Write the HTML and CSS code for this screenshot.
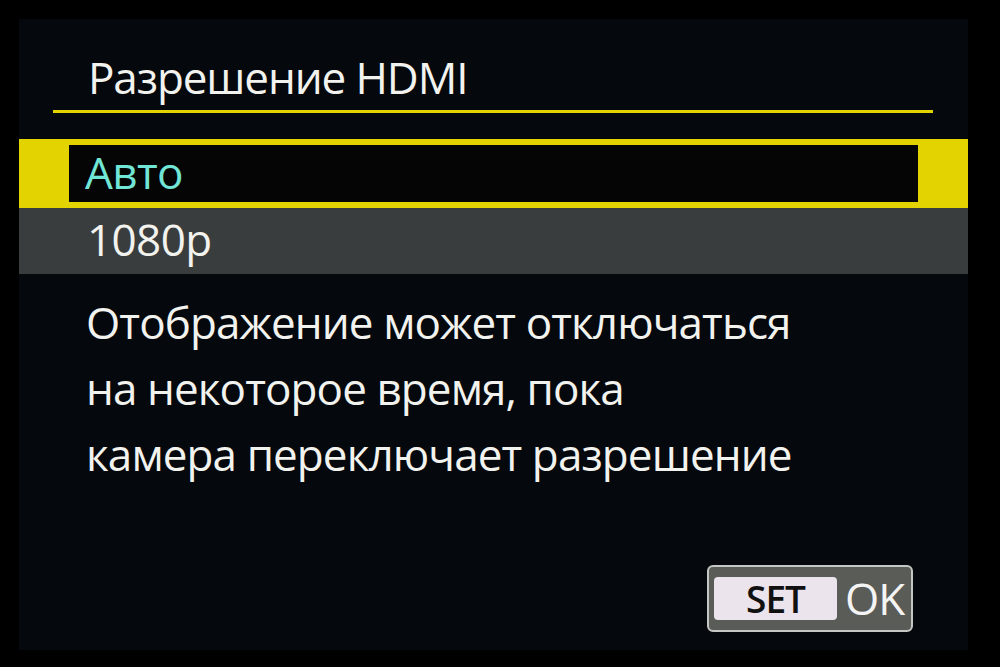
FILE: index.html
```html
<!DOCTYPE html>
<html lang="ru">
<head>
    <meta charset="UTF-8">
    <title>Разрешение HDMI</title>
    <link rel="stylesheet" href="styles.css">
</head>
<body>
    <div class="screen">
        <div class="header">
            <h1>Разрешение HDMI</h1>
        </div>

        <!-- Список вариантов -->
        <ul class="options">
            <li class="option selected"><span>Авто</span></li>
            <li class="option">1080p</li>
        </ul>

        <p class="note">Отображение может отключаться<br>на некоторое время, пока<br>камера переключает разрешение</p>

        <div class="footer">
            <div class="set-ok">
                <span class="set">SET</span>
                <span class="ok">OK</span>
            </div>
        </div>
    </div>
</body>
</html>
```

FILE: styles.css
```css
body {
    margin: 0;
    padding: 19px 32px 17px 19px;
    background-color: #000;
    font-family: "Open Sans", "Noto Sans", sans-serif;
    font-weight: 500;
    color: #f2f2ee;
}

.screen {
    width: 949px;
    height: 631px;
    background-color: #05080c;
    display: flex;
    flex-direction: column;
}

.header {
    margin: 0 35px 0 34px;
    padding: 30px 0 0 35px;
    height: 61px;
    border-bottom: 3px solid #e3d300;
}

h1 {
    margin: 0;
    font-size: 44px;
    font-weight: 500;
    line-height: 56px;
    letter-spacing: -1.1px;
}

.options {
    list-style: none;
    margin: 26px 0 0 0;
    padding: 0;
}

.option {
    height: 66px;
    padding-left: 68px;
    font-size: 44px;
    line-height: 62px;
    letter-spacing: -0.6px;
    background-color: #3a3d3d;
}

.option.selected {
    height: 69px;
    padding: 0;
    background-color: #e3d300;
    display: flex;
}

.option.selected span {
    margin: 6px 50px 6px 50px;
    flex: 1;
    background-color: #050505;
    color: #72e6d6;
    padding-left: 16px;
    line-height: 54px;
}

.note {
    margin: 15px 0 0 67px;
    font-size: 44px;
    line-height: 66px;
    letter-spacing: -0.9px;
}

.footer {
    flex: 1;
    display: flex;
    justify-content: flex-end;
    align-items: flex-end;
    padding: 0 55px 18px 0;
}

.set-ok {
    width: 206px;
    height: 67px;
    border: 2px solid #c4c8c4;
    border-radius: 6px;
    background-color: #5a5c58;
    display: flex;
    align-items: center;
    padding-left: 5px;
    box-sizing: border-box;
}

.set {
    width: 123px;
    height: 43px;
    background-color: #ece4ec;
    border-radius: 4px;
    color: #111;
    font-size: 37px;
    font-weight: 600;
    line-height: 43px;
    text-align: center;
    letter-spacing: -1px;
}

.ok {
    margin-left: 8px;
    color: #f4f4f4;
    font-size: 44px;
    line-height: 43px;
    letter-spacing: -1px;
}
```
